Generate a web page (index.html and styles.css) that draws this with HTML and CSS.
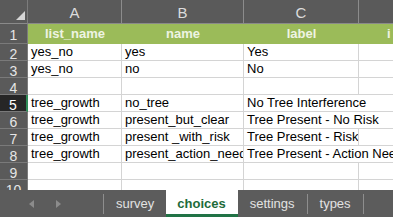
FILE: index.html
```html
<!DOCTYPE html>
<html>
<head>
<meta charset="utf-8">
<link rel="stylesheet" href="styles.css">
</head>
<body>
<div class="sheet">
  <div class="grid-wrap">
    <div class="grid">
      <div class="corner"><span class="tri"></span></div>
      <div class="colhead">A</div>
      <div class="colhead">B</div>
      <div class="colhead">C</div>
      <div class="colhead last"></div>

      <div class="rowhead r1">1</div>
      <div class="hcell">list_name</div>
      <div class="hcell">name</div>
      <div class="hcell">label</div>
      <div class="hcell left">i</div>

      <div class="rowhead">2</div>
      <div class="cell">yes_no</div>
      <div class="cell">yes</div>
      <div class="cell">Yes</div>
      <div class="cell last"></div>

      <div class="rowhead">3</div>
      <div class="cell">yes_no</div>
      <div class="cell">no</div>
      <div class="cell">No</div>
      <div class="cell last"></div>

      <div class="rowhead">4</div>
      <div class="cell"></div>
      <div class="cell"></div>
      <div class="cell"></div>
      <div class="cell last"></div>

      <div class="rowhead active">5</div>
      <div class="cell">tree_growth</div>
      <div class="cell">no_tree</div>
      <div class="cell span2">No Tree Interference</div>

      <div class="rowhead">6</div>
      <div class="cell">tree_growth</div>
      <div class="cell">present_but_clear</div>
      <div class="cell span2">Tree Present - No Risk</div>

      <div class="rowhead">7</div>
      <div class="cell">tree_growth</div>
      <div class="cell">present _with_risk</div>
      <div class="cell">Tree Present - Risk</div>
      <div class="cell last"></div>

      <div class="rowhead">8</div>
      <div class="cell">tree_growth</div>
      <div class="cell">present_action_need</div>
      <div class="cell span2">Tree Present - Action Needed</div>

      <div class="rowhead">9</div>
      <div class="cell"></div>
      <div class="cell"></div>
      <div class="cell"></div>
      <div class="cell last"></div>

      <div class="rowhead">10</div>
      <div class="cell"></div>
      <div class="cell"></div>
      <div class="cell"></div>
      <div class="cell last"></div>
    </div>
  </div>
  <div class="tabs">
    <div class="nav">
      <span class="arrow left"></span>
      <span class="arrow right"></span>
    </div>
    <span class="sep"></span>
    <div class="tab">survey</div>
    <div class="tab active">choices</div>
    <div class="tab">settings</div>
    <span class="sep"></span>
    <div class="tab">types</div>
    <span class="sep"></span>
  </div>
</div>
</body>
</html>
```
FILE: styles.css
```css
* { box-sizing: border-box; }
html, body { margin: 0; padding: 0; }
body {
  width: 393px;
  height: 217px;
  overflow: hidden;
  font-family: "Liberation Sans", Arial, sans-serif;
  background: #ffffff;
}
.sheet {
  width: 393px;
  height: 217px;
  display: flex;
  flex-direction: column;
}
.grid-wrap {
  height: 190px;
  overflow: hidden;
}
.grid {
  display: grid;
  grid-template-columns: 28px 94px 122px 115px 40px;
  grid-template-rows: 24px 20px repeat(9, 17px);
  width: 399px;
}
.corner {
  background: #5a5a5a;
  border-right: 1px solid #7c7c7c;
  border-bottom: 1px solid #8a8a8a;
  position: relative;
}
.tri {
  position: absolute;
  right: 2px;
  bottom: 3px;
  width: 0;
  height: 0;
  border-left: 9px solid transparent;
  border-bottom: 9px solid #d6d6d6;
}
.colhead {
  background: #5a5a5a;
  color: #dcdcdc;
  font-size: 15px;
  text-align: center;
  line-height: 23px;
  padding-top: 1px;
  border-right: 1px solid #8c8c8c;
  border-bottom: 1px solid #8a8a8a;
}
.colhead.last { border-right: none; }
.rowhead {
  background: #5a5a5a;
  color: #e6e6e6;
  font-size: 14px;
  text-align: center;
  line-height: 16px;
  padding-top: 2px;
  border-right: 1px solid #7c7c7c;
  border-bottom: 1px solid #7a7a7a;
}
.rowhead.r1 { line-height: 22px; padding-top: 0; }
.rowhead.active {
  background: #262626;
  color: #ffffff;
  border-right: 2px solid #2e8b57;
}
.hcell {
  background: #9bbb59;
  color: #eef4e3;
  font-weight: bold;
  font-size: 13px;
  text-align: center;
  line-height: 20px;
  white-space: nowrap;
  overflow: hidden;
}
.hcell.left { text-align: left; padding-left: 28px; }
.cell {
  color: #000000;
  font-size: 13px;
  line-height: 16px;
  padding-left: 3px;
  white-space: nowrap;
  overflow: hidden;
  border-right: 1px solid #d4d4d4;
  border-bottom: 1px solid #d4d4d4;
}
.cell.last { border-right: none; }
.cell.span2 { grid-column: span 2; border-right: none; }
.tabs {
  height: 27px;
  background: #5c5c5c;
  display: flex;
  align-items: center;
  font-size: 13px;
  color: #e2e2e2;
}
.nav {
  width: 103px;
  height: 100%;
  display: flex;
  align-items: center;
  padding-left: 29px;
  gap: 22px;
}
.arrow {
  width: 0;
  height: 0;
  border-top: 4px solid transparent;
  border-bottom: 4px solid transparent;
}
.arrow.left { border-right: 5px solid #8c8c8c; }
.arrow.right { border-left: 5px solid #8c8c8c; }
.sep {
  width: 1px;
  height: 20px;
  background: #8e8e8e;
}
.tab {
  height: 100%;
  padding: 0 12px;
  display: flex;
  align-items: center;
  white-space: nowrap;
}
.tab.active {
  background: #ffffff;
  color: #1d6b3a;
  font-weight: bold;
  padding: 0 12px 0 11px;
  border-bottom: 3px solid #217346;
  padding-top: 2px;
}
```
